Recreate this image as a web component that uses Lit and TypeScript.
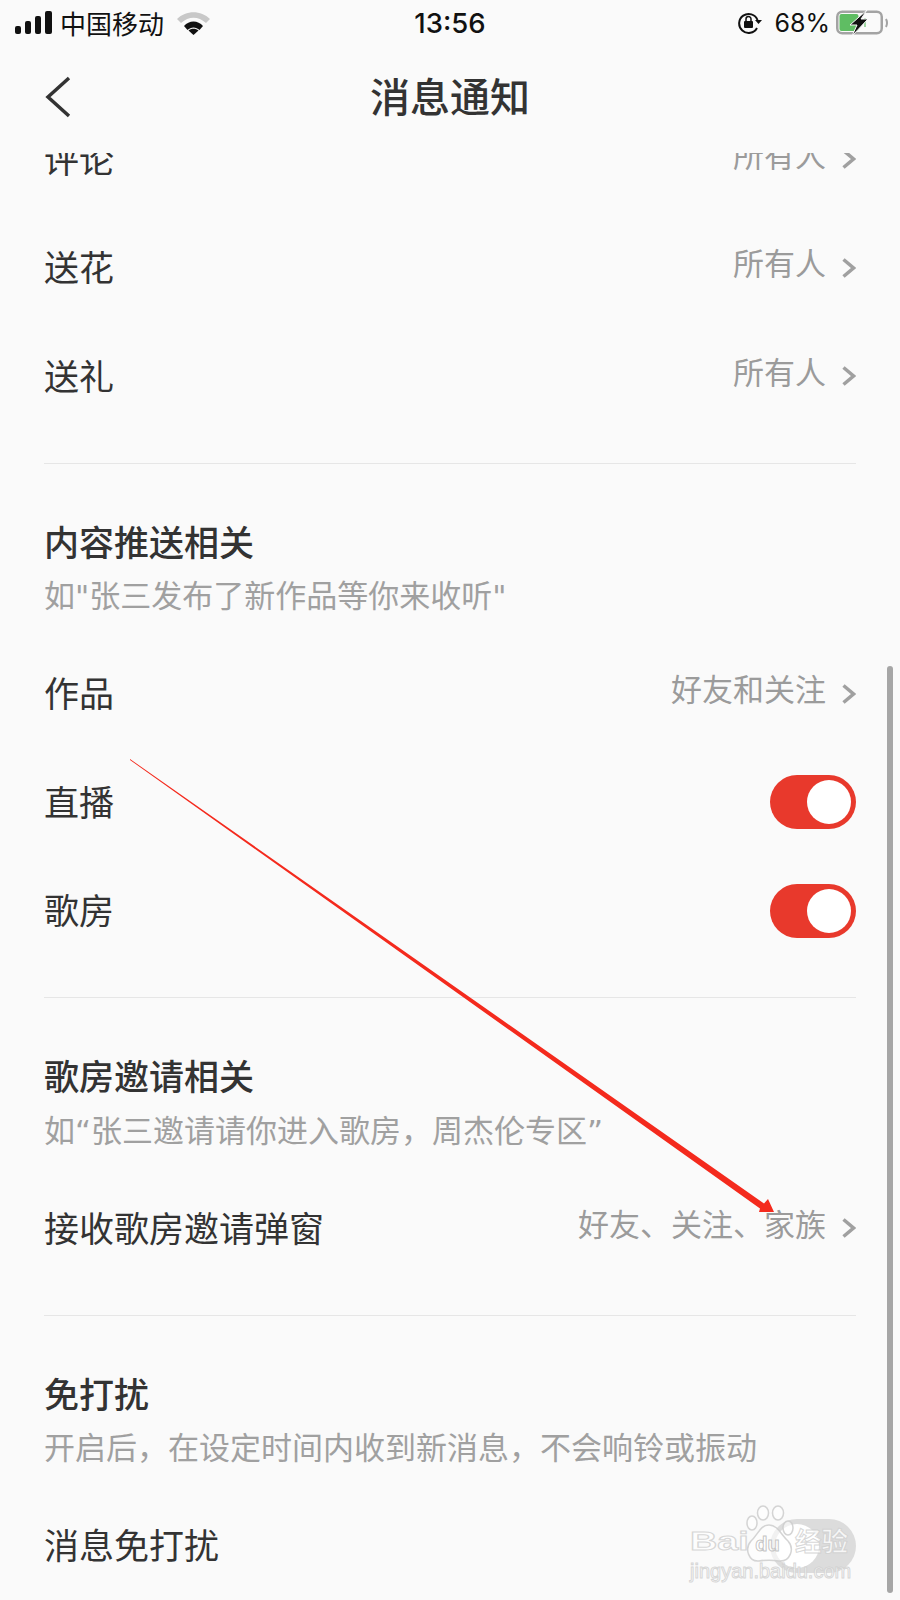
import { LitElement, html, css, svg } from 'lit';
import { customElement } from 'lit/decorators.js';

// small right chevron used on every value row
const chevron = html`<svg class="chev" width="14" height="20" viewBox="0 0 14 20"><path d="M1.500 1.500 L11.500 10 L1.500 18.500" fill="none" stroke="#a0a0a0" stroke-width="3.500"/></svg>`;

// tapered annotation arrow, thin at the start and heavy at the head
const arrow = svg`
  <polygon points="130,759 764,1203.500 768,1199 774,1212 759,1212 760,1208.500 130,760" fill="#f42a1d"/>
`;

@customElement('app-root')
export class AppRoot extends LitElement {
  static styles = css`
    :host {
      display: block;
      font-family: 'Noto Sans CJK SC', 'Liberation Sans', sans-serif;
    }
    .page {
      position: relative;
      width: 900px;
      height: 1600px;
      overflow: hidden;
      background: #fafafa;
      display: flex;
      flex-direction: column;
      color: #333;
    }
    .status {
      height: 45px;
      flex: none;
      display: flex;
      align-items: center;
      padding: 0 12px 0 15px;
      font-size: 26px;
      color: #111;
      position: relative;
    }
    .carrier { margin-left: 8px; line-height: 45px; }
    .wifi { margin-left: 13px; }
    .time {
      position: absolute;
      left: 0;
      right: 0;
      top: 0;
      text-align: center;
      line-height: 46px;
      font-family: Inter, 'Liberation Sans', sans-serif;
      font-weight: 500;
      font-size: 27.5px;
    }
    .status-right {
      margin-left: auto;
      display: flex;
      align-items: center;
    }
    .pct {
      font-family: Inter, 'Liberation Sans', sans-serif;
      font-size: 25px;
      margin: 0 6px 0 12px;
    }
    .nav {
      height: 108px;
      flex: none;
      box-sizing: border-box;
      padding-bottom: 8px;
      display: flex;
      align-items: center;
      justify-content: center;
      position: relative;
      font-size: 40px;
      font-weight: 500;
      background: #fafafa;
    }
    .back { position: absolute; left: 44px; top: 30px; }
    .scroll { flex: 1; overflow: hidden; }
    .content { margin-top: -50px; padding: 0 44px; }
    .row {
      height: 108.5px;
      display: flex;
      align-items: center;
      justify-content: space-between;
      font-size: 35px;
    }
    .value {
      display: flex;
      align-items: center;
      font-size: 31px;
      color: #9b9b9b;
    }
    .value span { margin-bottom: 8px; }
    .chev { margin: 4px 0 0 16px; }
    .divider { height: 1px; background: #e6e6e6; margin-top: 34px; }
    .head { padding: 54px 0 21.5px; }
    .title { font-size: 35px; font-weight: 500; line-height: 46px; }
    .sub {
      font-family: 'DejaVu Sans', 'Noto Sans CJK SC', sans-serif;
      font-size: 31px;
      line-height: 40px;
      margin-top: 12.5px;
      color: #a0a0a0;
    }
    .toggle {
      width: 86px;
      height: 54px;
      margin-top: 4px;
      border-radius: 27px;
      background: #e8392c;
      display: flex;
      align-items: center;
      justify-content: flex-end;
      padding: 0 5px;
      box-sizing: border-box;
    }
    .toggle.off { background: #dcdcdc; justify-content: flex-start; }
    .knob { width: 44px; height: 44px; border-radius: 50%; background: #fff; }
    .scrollbar {
      position: absolute;
      left: 887px;
      top: 666px;
      width: 6px;
      height: 927px;
      border-radius: 3px;
      background: #a6a6a6;
    }
    .arrow { position: absolute; left: 0; top: 0; pointer-events: none; }
    .mark {
      position: absolute;
      left: 690px;
      top: 1505px;
      width: 165px;
      color: rgba(255, 255, 255, 0.75);
      -webkit-text-stroke: 1px rgba(205, 205, 205, 0.8);
      font-family: 'Liberation Sans', sans-serif;
      pointer-events: none;
    }
    .mark-top { display: flex; align-items: flex-start; height: 60px; }
    .mark-bai {
      width: 55px;
      margin-top: 21px;
      font-size: 26px;
      font-weight: 700;
      line-height: 30px;
      transform: scaleX(1.45);
      transform-origin: left;
    }
    .mark-paw { width: 50px; height: 60px; flex: none; }
    .mark-cn {
      font-family: 'Noto Sans CJK SC', sans-serif;
      font-size: 26.5px;
      font-weight: 700;
      line-height: 34px;
      margin-top: 18px;
    }
    .mark-url { font-size: 20px; line-height: 20px; margin-top: -4px; white-space: nowrap; }
  `;

  private valueRow(label: string, value: string) {
    return html`<div class="row"><span>${label}</span><div class="value"><span>${value}</span>${chevron}</div></div>`;
  }

  private toggleRow(label: string, on = true) {
    return html`<div class="row"><span>${label}</span><div class="toggle ${on ? '' : 'off'}"><div class="knob"></div></div></div>`;
  }

  private head(title: string, sub: string) {
    return html`<div class="divider"></div><div class="head"><div class="title">${title}</div><div class="sub">${sub}</div></div>`;
  }

  render() {
    return html`
      <div class="page">
        <div class="status">
          <svg width="37" height="24" viewBox="0 0 37 24" fill="#111">
            <rect x="0" y="15" width="6" height="8" rx="2"/>
            <rect x="10" y="10" width="6" height="13" rx="2"/>
            <rect x="20" y="5" width="6" height="18" rx="2"/>
            <rect x="30" y="0" width="7" height="23" rx="2"/>
          </svg>
          <span class="carrier">中国移动</span>
          <svg class="wifi" width="33" height="25" viewBox="0 0 33 25">
            <path d="M0 9 C9 0 24 0 33 9 L29 13 C21 6 12 6 4 13Z" fill="#c8c8c8"/>
            <path d="M7 16 C12 10 21 10 26 16 L22.500 20 C19 16.500 14 16.500 10.500 20Z" fill="#111"/>
            <path d="M11.500 20.500 C14 18 19 18 21.500 20.500 L16.500 25Z" fill="#111"/>
          </svg>
          <span class="time">13:56</span>
          <div class="status-right">
            <svg width="24" height="22" viewBox="0 0 24 22">
              <path d="M19 16 A9.500 9.500 0 1 1 19.500 8" fill="none" stroke="#111" stroke-width="2"/>
              <path d="M17 8 L24 8 L20.500 12Z" fill="#111"/>
              <rect x="6" y="9" width="9" height="7" rx="1" fill="#111"/>
              <path d="M8 9 V7 a2.500 2.500 0 0 1 5 0 V9" fill="none" stroke="#111" stroke-width="1.500"/>
            </svg>
            <span class="pct">68%</span>
            <svg width="52" height="26" viewBox="0 0 52 26">
              <rect x="1.250" y="1.750" width="44.500" height="21.500" rx="5" fill="none" stroke="#a3a3a3" stroke-width="2.500"/>
              <rect x="3.500" y="4" width="19" height="17" rx="2" fill="#5fbd63"/>
              <rect x="28" y="8" width="2" height="9" fill="#9fd6a2"/>
              <path d="M50 9 Q52 13 50 17" fill="none" stroke="#a3a3a3" stroke-width="2"/>
              <path d="M31 0 L14 15 L21 15 L16 26 L32 9 L25 9Z" fill="#111" stroke="#fafafa" stroke-width="1"/>
            </svg>
          </div>
        </div>
        <div class="nav">
          <svg class="back" width="28" height="44" viewBox="0 0 28 44"><path d="M25 3 L4 22 L25 41" fill="none" stroke="#333" stroke-width="3.500"/></svg>
          消息通知
        </div>
        <div class="scroll">
          <div class="content">
            ${this.valueRow('评论', '所有人')}
            ${this.valueRow('送花', '所有人')}
            ${this.valueRow('送礼', '所有人')}
            ${this.head('内容推送相关', '如"张三发布了新作品等你来收听"')}
            ${this.valueRow('作品', '好友和关注')}
            ${this.toggleRow('直播')}
            ${this.toggleRow('歌房')}
            ${this.head('歌房邀请相关', '如“张三邀请请你进入歌房，周杰伦专区”')}
            ${this.valueRow('接收歌房邀请弹窗', '好友、关注、家族')}
            ${this.head('免打扰', '开启后，在设定时间内收到新消息，不会响铃或振动')}
            ${this.toggleRow('消息免打扰', false)}
          </div>
        </div>
        <div class="scrollbar"></div>
        <svg class="arrow" width="900" height="1600" viewBox="0 0 900 1600">${arrow}</svg>
        <div class="mark">
          <div class="mark-top">
            <span class="mark-bai">Bai</span>
            <svg class="mark-paw" viewBox="0 0 50 60">
              <g fill="rgba(255,255,255,.6)" stroke="rgba(205,205,205,.85)" stroke-width="1.500">
                <ellipse cx="7" cy="18" rx="5" ry="7"/>
                <ellipse cx="18" cy="8" rx="5.500" ry="7"/>
                <ellipse cx="33" cy="8" rx="5.500" ry="7"/>
                <ellipse cx="43" cy="23" rx="5" ry="7"/>
                <path d="M24 20 C33 20 36 30 43 36 C50 44 45 57 34 56 C28 55 20 55 14 56 C4 57 -1 44 6 36 C13 30 15 20 24 20Z"/>
              </g>
              <text x="22.500" y="46" text-anchor="middle" font-size="20" font-weight="700" font-family="Liberation Sans" fill="rgba(255,255,255,.7)" stroke="rgba(190,190,190,.9)" stroke-width="1">du</text>
            </svg>
            <span class="mark-cn">经验</span>
          </div>
          <div class="mark-url">jingyan.baidu.com</div>
        </div>
      </div>
    `;
  }
}
